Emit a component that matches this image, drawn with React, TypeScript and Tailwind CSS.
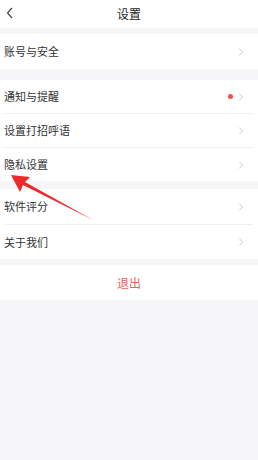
import React from "react";

const Chevron = () => (
  <svg width="6" height="10" viewBox="0 0 6 10" className="block">
    <path d="M1.2 1.5 L4.6 5 L1.2 8.5" fill="none" stroke="#c8c8c8" strokeWidth="0.9" />
  </svg>
);

const Row = ({ label, dot, divider, h }: { label: string; dot?: boolean; divider?: boolean; h: string }) => (
  <div className="bg-white">
    <div className={`flex items-center ${h} pl-[4px] pr-[14px]`}>
      <span className="flex-1 text-[11px] text-[#333]">{label}</span>
      {dot && <span className="w-[5px] h-[5px] rounded-full bg-[#ef5350] mr-[5px]" />}
      <Chevron />
    </div>
    {divider && <div className="ml-[4px] mr-[5px] h-px bg-[#efefef]" />}
  </div>
);

export default function App() {
  return (
    <div
      className="w-[258px] h-[460px] bg-[#f6f6f8] overflow-hidden relative"
      style={{ fontFamily: '"Noto Sans CJK SC", "Noto Sans", sans-serif' }}
    >
      <div className="h-[28px] bg-white flex items-center relative">
        <svg width="8" height="12" viewBox="0 0 8 12" className="absolute left-[6px] top-[7px]">
          <path d="M6 1 L1.5 6 L6 11" fill="none" stroke="#444" strokeWidth="1.2" />
        </svg>
        <span className="flex-1 text-center text-[12px] text-[#222]">设置</span>
      </div>
      <div className="h-[6px]" />
      <Row label="账号与安全" h="h-[35px]" />
      <div className="h-[11px]" />
      <div className="bg-white">
        <Row label="通知与提醒" dot divider h="h-[33px]" />
        <Row label="设置打招呼语" divider h="h-[33px]" />
        <Row label="隐私设置" h="h-[33px]" />
      </div>
      <div className="h-[8px]" />
      <div className="bg-white">
        <Row label="软件评分" divider h="h-[35px]" />
        <Row label="关于我们" h="h-[34px]" />
      </div>
      <div className="h-[6px]" />
      <div className="bg-white h-[35px] flex items-center justify-center">
        <span className="text-[12px] text-[#e8625f]">退出</span>
      </div>
      <svg
        className="absolute left-0 top-0 pointer-events-none"
        width="258"
        height="460"
        viewBox="0 0 258 460"
      >
        <path d="M11 175 L30 177 L25 182 L93 220 L23 185 L20 192 Z" fill="#ec2a2a" />
      </svg>
    </div>
  );
}
